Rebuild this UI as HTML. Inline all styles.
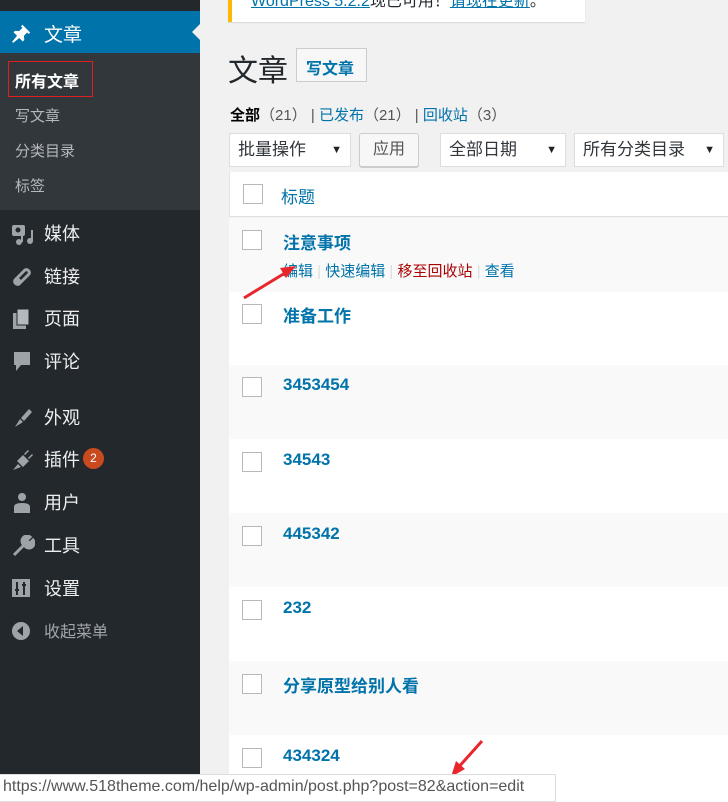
<!DOCTYPE html>
<html><head><meta charset="utf-8"><style>
*{margin:0;padding:0;box-sizing:border-box}
html,body{width:728px;height:802px;overflow:hidden}
body{background:#f1f1f1;font-family:"Liberation Sans","Noto Sans CJK SC",sans-serif;position:relative}
.side{position:absolute;left:0;top:0;width:200px;height:802px;background:#23282d}
.cur{position:absolute;left:0;top:11px;width:200px;height:42px;background:#0073aa;color:#fff;font-size:19px}
.cur span{position:absolute;left:44px;top:9px}
.cur:after{content:"";position:absolute;right:0;top:13px;border:8px solid transparent;border-right-color:#f1f1f1}
.sub{position:absolute;left:0;top:53px;width:200px;height:157px;background:#32373c}
.sub div{position:absolute;left:15px;font-size:15px;color:#b4b9be}
.m{position:absolute;left:0;width:200px;height:30px;color:#eee;font-size:18px}
.m span{position:absolute;left:44px;top:2px}
.m svg{position:absolute;left:11px;top:5px}
.notice{position:absolute;left:228px;top:0;width:357px;height:22px;background:#fff;border-left:4px solid #ffb900;box-shadow:0 1px 1px rgba(0,0,0,.1);overflow:hidden}
.notice span{position:absolute;left:19px;top:-13px;font-size:16px;color:#23282d;white-space:nowrap}
.notice a{color:#0073aa;text-decoration:underline}
.sel{position:absolute;top:133px;height:34px;background:#fff;border:1px solid #ddd;font-size:17px;color:#32373c;padding:0 8px;line-height:32px}
.sel:after{content:"▼";position:absolute;right:8px;top:0;font-size:11px;color:#222}
.row{position:absolute;left:229px;width:499px;height:74px}
.cb{position:absolute;left:13px;width:20px;height:20px;border:1px solid #b4b9be;background:#fff}
.t{position:absolute;left:54px;font-size:17px;font-weight:bold;color:#0073aa}
</style></head><body>
<div class="side">
 <div class="cur"><svg style="position:absolute;left:11px;top:11px" width="22" height="22" viewBox="0 0 20 20"><path fill="#fff" d="M10.4 2.5l7 7-1.4 1.4-1.3-1.3-3 3 .4 3.7-1.4 1.4-3.2-3.2L2 19l-1-1 4.5-5.5L2.3 9.3l1.4-1.4 3.7.4 3-3-1.3-1.3z"/></svg><span>文章</span></div>
 <div class="sub">
  <div style="left:8px;top:8px;width:85px;height:36px;border:1px solid #e02020;"></div>
  <div style="top:15px;color:#fff;font-weight:bold;font-size:16px">所有文章</div>
  <div style="top:52px">写文章</div>
  <div style="top:87px">分类目录</div>
  <div style="top:122px">标签</div>
 </div>
 <div class="m" style="top:218px"><svg width="24" height="22" viewBox="0 0 24 22"><rect x="1" y="2" width="13" height="11" rx="2" fill="#9ea3a8"/><circle cx="7" cy="7" r="2.5" fill="#23282d"/><circle cx="8" cy="19" r="3" fill="#9ea3a8"/><circle cx="19" cy="18" r="3" fill="#9ea3a8"/><rect x="10" y="9" width="2" height="10" fill="#9ea3a8"/><rect x="20" y="7" width="2" height="11" fill="#9ea3a8"/></svg><span>媒体</span></div>
 <div class="m" style="top:261px"><svg width="24" height="22" viewBox="0 0 24 22"><path d="M5 17l4-4M9 9l5-5a3 3 0 014 4l-5 5M13 13l-5 5a3 3 0 01-4-4l5-5" stroke="#9ea3a8" stroke-width="3" fill="none"/></svg><span>链接</span></div>
 <div class="m" style="top:303px"><svg width="24" height="22" viewBox="0 0 24 22"><rect x="2" y="5" width="13" height="16" fill="#9ea3a8"/><rect x="6" y="1" width="12" height="16" fill="#b4b9be" stroke="#23282d"/></svg><span>页面</span></div>
 <div class="m" style="top:346px"><svg width="24" height="22" viewBox="0 0 24 22"><path d="M3 1h16v13H10l-5 6v-6H3z" fill="#9ea3a8"/></svg><span>评论</span></div>
 <div class="m" style="top:402px"><svg width="24" height="22" viewBox="0 0 24 22"><path d="M4 20l5-8 3 3-8 5zM10 11l8-9 3 3-8 9z" fill="#9ea3a8"/></svg><span>外观</span></div>
 <div class="m" style="top:444px"><svg width="24" height="22" viewBox="0 0 24 22"><path d="M2 21l5-6 3 3zM6 12l6-6 6 6-6 6zM13 5l4-4 1 1-4 4zM17 9l4-4 1 1-4 4z" fill="#9ea3a8"/></svg><span>插件</span><b style="position:absolute;left:83px;top:4px;width:21px;height:21px;border-radius:50%;background:#ca4a1f;color:#fff;font-size:12px;font-weight:normal;text-align:center;line-height:21px">2</b></div>
 <div class="m" style="top:487px"><svg width="24" height="22" viewBox="0 0 24 22"><circle cx="11" cy="5" r="4" fill="#9ea3a8"/><path d="M3 21v-6q0-4 8-4t8 4v6z" fill="#9ea3a8"/></svg><span>用户</span></div>
 <div class="m" style="top:530px"><svg width="24" height="22" viewBox="0 0 24 22"><path d="M3 20l10-10M13 10a5 5 0 016-8l-3 3 1 2 2 1 3-3a5 5 0 01-8 6" stroke="#9ea3a8" stroke-width="3" fill="#9ea3a8"/></svg><span>工具</span></div>
 <div class="m" style="top:573px"><svg width="24" height="22" viewBox="0 0 24 22"><rect x="1" y="1" width="18" height="18" fill="#9ea3a8"/><path d="M6 4v13M13 4v13M4 12h4M11 7h4" stroke="#23282d" stroke-width="2"/></svg><span>设置</span></div>
 <div class="m" style="top:616px;color:#a0a5aa;font-size:16px"><svg width="24" height="22" viewBox="0 0 24 22"><circle cx="10" cy="10" r="9" fill="#9ea3a8"/><path d="M12 5l-6 5 6 5z" fill="#23282d"/></svg><span>收起菜单</span></div>
</div>
<div class="notice"><span><a>WordPress 5.2.2</a>现已可用！<a>请现在更新</a>。</span></div>
<div style="position:absolute;left:228px;top:46px;font-size:30px;color:#23282d">文章</div>
<div style="position:absolute;left:296px;top:48px;width:71px;height:34px;border:1px solid #ccc;background:#f7f7f7;color:#0073aa;font-size:16px;font-weight:bold;padding:6px 9px">写文章</div>
<div style="position:absolute;left:230px;top:104px;font-size:15px;color:#555;white-space:pre"><b style="color:#000">全部</b>（21） | <span style="color:#0073aa">已发布</span>（21） | <span style="color:#0073aa">回收站</span>（3）</div>
<div class="sel" style="left:229px;width:122px">批量操作</div>
<div style="position:absolute;left:359px;top:133px;width:60px;height:34px;border:1px solid #ccc;background:#f7f7f7;border-radius:3px;font-size:16px;color:#555;line-height:32px;text-align:center;box-shadow:0 1px 0 #ccc">应用</div>
<div class="sel" style="left:440px;width:126px">全部日期</div>
<div class="sel" style="left:574px;width:150px">所有分类目录</div>
<div style="position:absolute;left:229px;top:172px;width:499px;height:45px;background:#fff;border-bottom:1px solid #e1e1e1;border-left:1px solid #e5e5e5">
 <div class="cb" style="top:12px"></div><div style="position:absolute;left:51px;top:11px;font-size:17px;color:#0073aa">标题</div></div>
<div class="row" style="top:218px;background:#f9f9f9"><div class="cb" style="top:12px"></div><div class="t" style="top:11px">注意事项</div>
 <div style="position:absolute;left:54px;top:42px;font-size:15px;color:#0073aa;white-space:pre">编辑 <span style="color:#ddd">|</span> 快速编辑 <span style="color:#ddd">|</span> <span style="color:#a00">移至回收站</span> <span style="color:#ddd">|</span> 查看</div></div>
<div class="row" style="top:292px;background:#fff"><div class="cb" style="top:12px"></div><div class="t" style="top:10px">准备工作</div></div>
<div class="row" style="top:365px;background:#f9f9f9"><div class="cb" style="top:12px"></div><div class="t" style="top:10px">3453454</div></div>
<div class="row" style="top:439px;background:#fff"><div class="cb" style="top:13px"></div><div class="t" style="top:11px">34543</div></div>
<div class="row" style="top:513px;background:#f9f9f9"><div class="cb" style="top:13px"></div><div class="t" style="top:11px">445342</div></div>
<div class="row" style="top:587px;background:#fff"><div class="cb" style="top:13px"></div><div class="t" style="top:11px">232</div></div>
<div class="row" style="top:661px;background:#f9f9f9"><div class="cb" style="top:13px"></div><div class="t" style="top:11px">分享原型给别人看</div></div>
<div class="row" style="top:735px;background:#fff"><div class="cb" style="top:13px"></div><div class="t" style="top:11px">434324</div></div>
<svg style="position:absolute;left:0;top:0" width="728" height="802"><path d="M244 298L290 270" stroke="#e8262c" stroke-width="3"/><path d="M296 266l-16 2 6 10z" fill="#e8262c"/><path d="M482 741L456 770" stroke="#e8262c" stroke-width="3"/><path d="M451 777l5-16 9 8z" fill="#e8262c"/></svg>
<div style="position:absolute;left:0;top:774px;width:556px;height:28px;background:#fff;border:1px solid #ddd;border-left:none;font-size:16px;color:#555;padding:3px 3px;white-space:nowrap">https://www.518theme.com/help/wp-admin/post.php?post=82&amp;action=edit</div>
</body></html>
